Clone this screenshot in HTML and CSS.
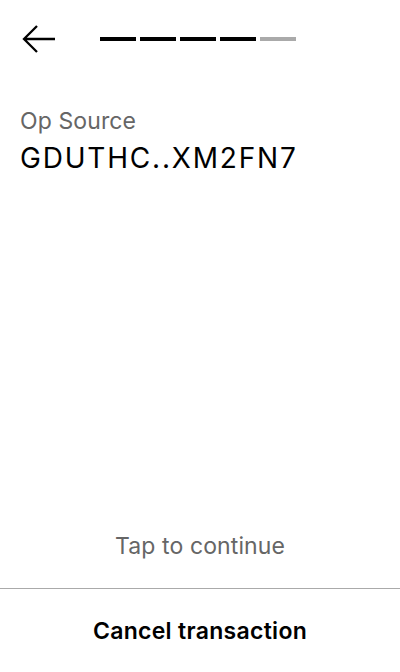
FILE: index.html
```html
<!DOCTYPE html>
<html>
<head>
<meta charset="utf-8">
<link rel="stylesheet" href="styles.css">
</head>
<body>
<div class="screen">
  <header class="top">
    <svg class="back" width="36" height="28" viewBox="0 0 36 28">
      <path d="M34 14H3M16 1L3 14L16 27" fill="none" stroke="#000" stroke-width="2.3"/>
    </svg>
    <div class="steps">
      <span class="step done"></span>
      <span class="step done"></span>
      <span class="step done"></span>
      <span class="step done"></span>
      <span class="step"></span>
    </div>
  </header>
  <main class="content">
    <div class="label">Op Source</div>
    <div class="value">GDUTHC..XM2FN7</div>
  </main>
  <div class="tap">Tap to continue</div>
  <footer class="footer">
    <button class="cancel">Cancel transaction</button>
  </footer>
</div>
</body>
</html>
```
FILE: styles.css
```css
* { box-sizing: border-box; }
html, body { margin: 0; padding: 0; background: #fff; }
body { font-family: Inter, "Noto Sans", sans-serif; color: #000; }
.screen { width: 400px; height: 672px; display: flex; flex-direction: column; }
.top { display: flex; align-items: center; height: 78px; padding: 0 0 0 21px; }
.back { display: block; margin-right: 43px; }
.steps { display: flex; gap: 4px; }
.step { display: block; width: 36px; height: 4px; background: #aaa; }
.step.done { background: #000; }
.content { flex: 1; padding: 28px 20px 0; }
.label { font-size: 23px; color: #666; line-height: 30px; letter-spacing: 0.1px; }
.value { font-size: 28px; line-height: 36px; margin-top: 4px; letter-spacing: 1.8px; }
.tap { text-align: center; font-size: 23px; color: #666; line-height: 30px; margin-bottom: 27px; letter-spacing: 0.1px; }
.footer { border-top: 1px solid #aaa; height: 84px; display: flex; align-items: center; justify-content: center; }
.cancel { border: 0; background: none; font-family: inherit; font-size: 23px; font-weight: 600; color: #000; padding: 0; letter-spacing: 0.3px; }
```
